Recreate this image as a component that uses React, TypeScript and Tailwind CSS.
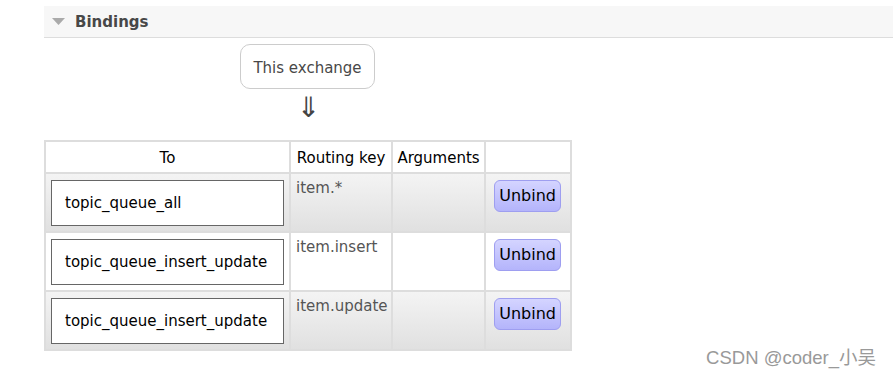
const rows = [
  { queue: "topic_queue_all", key: "item.*" },
  { queue: "topic_queue_insert_update", key: "item.insert" },
  { queue: "topic_queue_insert_update", key: "item.update" },
];

function UnbindButton() {
  return (
    <button className="h-[32px] px-[4px] rounded-[6px] border border-[#9e9ef0] bg-gradient-to-b from-[#d4d4ff] to-[#b4b4fb] text-[16px] text-black leading-none">
      Unbind
    </button>
  );
}

export default function App() {
  return (
    <div className="w-[893px] h-[377px] bg-white relative overflow-hidden font-['DejaVu_Sans',sans-serif] text-[#444]">
      <div className="pl-[44px] pt-[6px]">
        {/* Section header */}
        <div className="h-[32px] bg-[#f7f7f7] border-b border-[#ddd] flex items-center pl-[8px]">
          <svg width="13" height="8" viewBox="0 0 13 8" className="mr-[10px] mt-[1px]">
            <polygon points="0,0 13,0 6.5,7" fill="#aaa" />
          </svg>
          <span className="text-[15px] font-bold text-[#484848] mt-[2px]">Bindings</span>
        </div>

        {/* This exchange */}
        <div className="ml-[196px] mt-[6px] w-[135px] h-[45px] border border-[#ccc] rounded-[10px] flex items-center justify-center pt-[4px] text-[15px] text-[#484848]">
          This exchange
        </div>
        <div className="ml-[253px] mt-[5px] h-[28px] text-[28px] leading-[28px] text-[#444]">⇓</div>

        {/* Bindings table */}
        <table className="mt-[18px] w-[526px] table-fixed border-collapse text-[15px]">
          <thead>
            <tr className="h-[32px] bg-white">
              <th className="w-[245px] border-2 border-[#ddd] font-normal text-black pt-[2px]">To</th>
              <th className="w-[102px] border-2 border-[#ddd] font-normal text-black pt-[2px] whitespace-nowrap">Routing key</th>
              <th className="w-[93px] border-2 border-[#ddd] font-normal text-black pt-[2px]">Arguments</th>
              <th className="w-[86px] border-2 border-[#ddd]"></th>
            </tr>
          </thead>
          <tbody>
            {rows.map((r, i) => (
              <tr
                key={i}
                className={
                  i % 2 === 0
                    ? "h-[59px] bg-gradient-to-b from-[#f4f4f4] to-[#e0e0e0]"
                    : "h-[59px] bg-white"
                }
              >
                <td className="border-2 border-[#ddd] px-[5px] align-middle">
                  <div className="h-[46px] border border-[#666] bg-white flex items-center pl-[13px] pt-[2px] text-black">
                    {r.queue}
                  </div>
                </td>
                <td className="border-2 border-[#ddd] align-top px-[5px] pt-[3px] text-[#555]">{r.key}</td>
                <td className="border-2 border-[#ddd]"></td>
                <td className="border-2 border-[#ddd] align-top pt-[6px] text-right pr-[9px]">
                  <UnbindButton />
                </td>
              </tr>
            ))}
          </tbody>
        </table>
      </div>

      <div className="absolute right-[17px] bottom-[5px] text-[18.5px] text-[#999] font-['Liberation_Sans','Noto_Sans_CJK_SC',sans-serif]">
        CSDN @coder_小吴
      </div>
    </div>
  );
}
